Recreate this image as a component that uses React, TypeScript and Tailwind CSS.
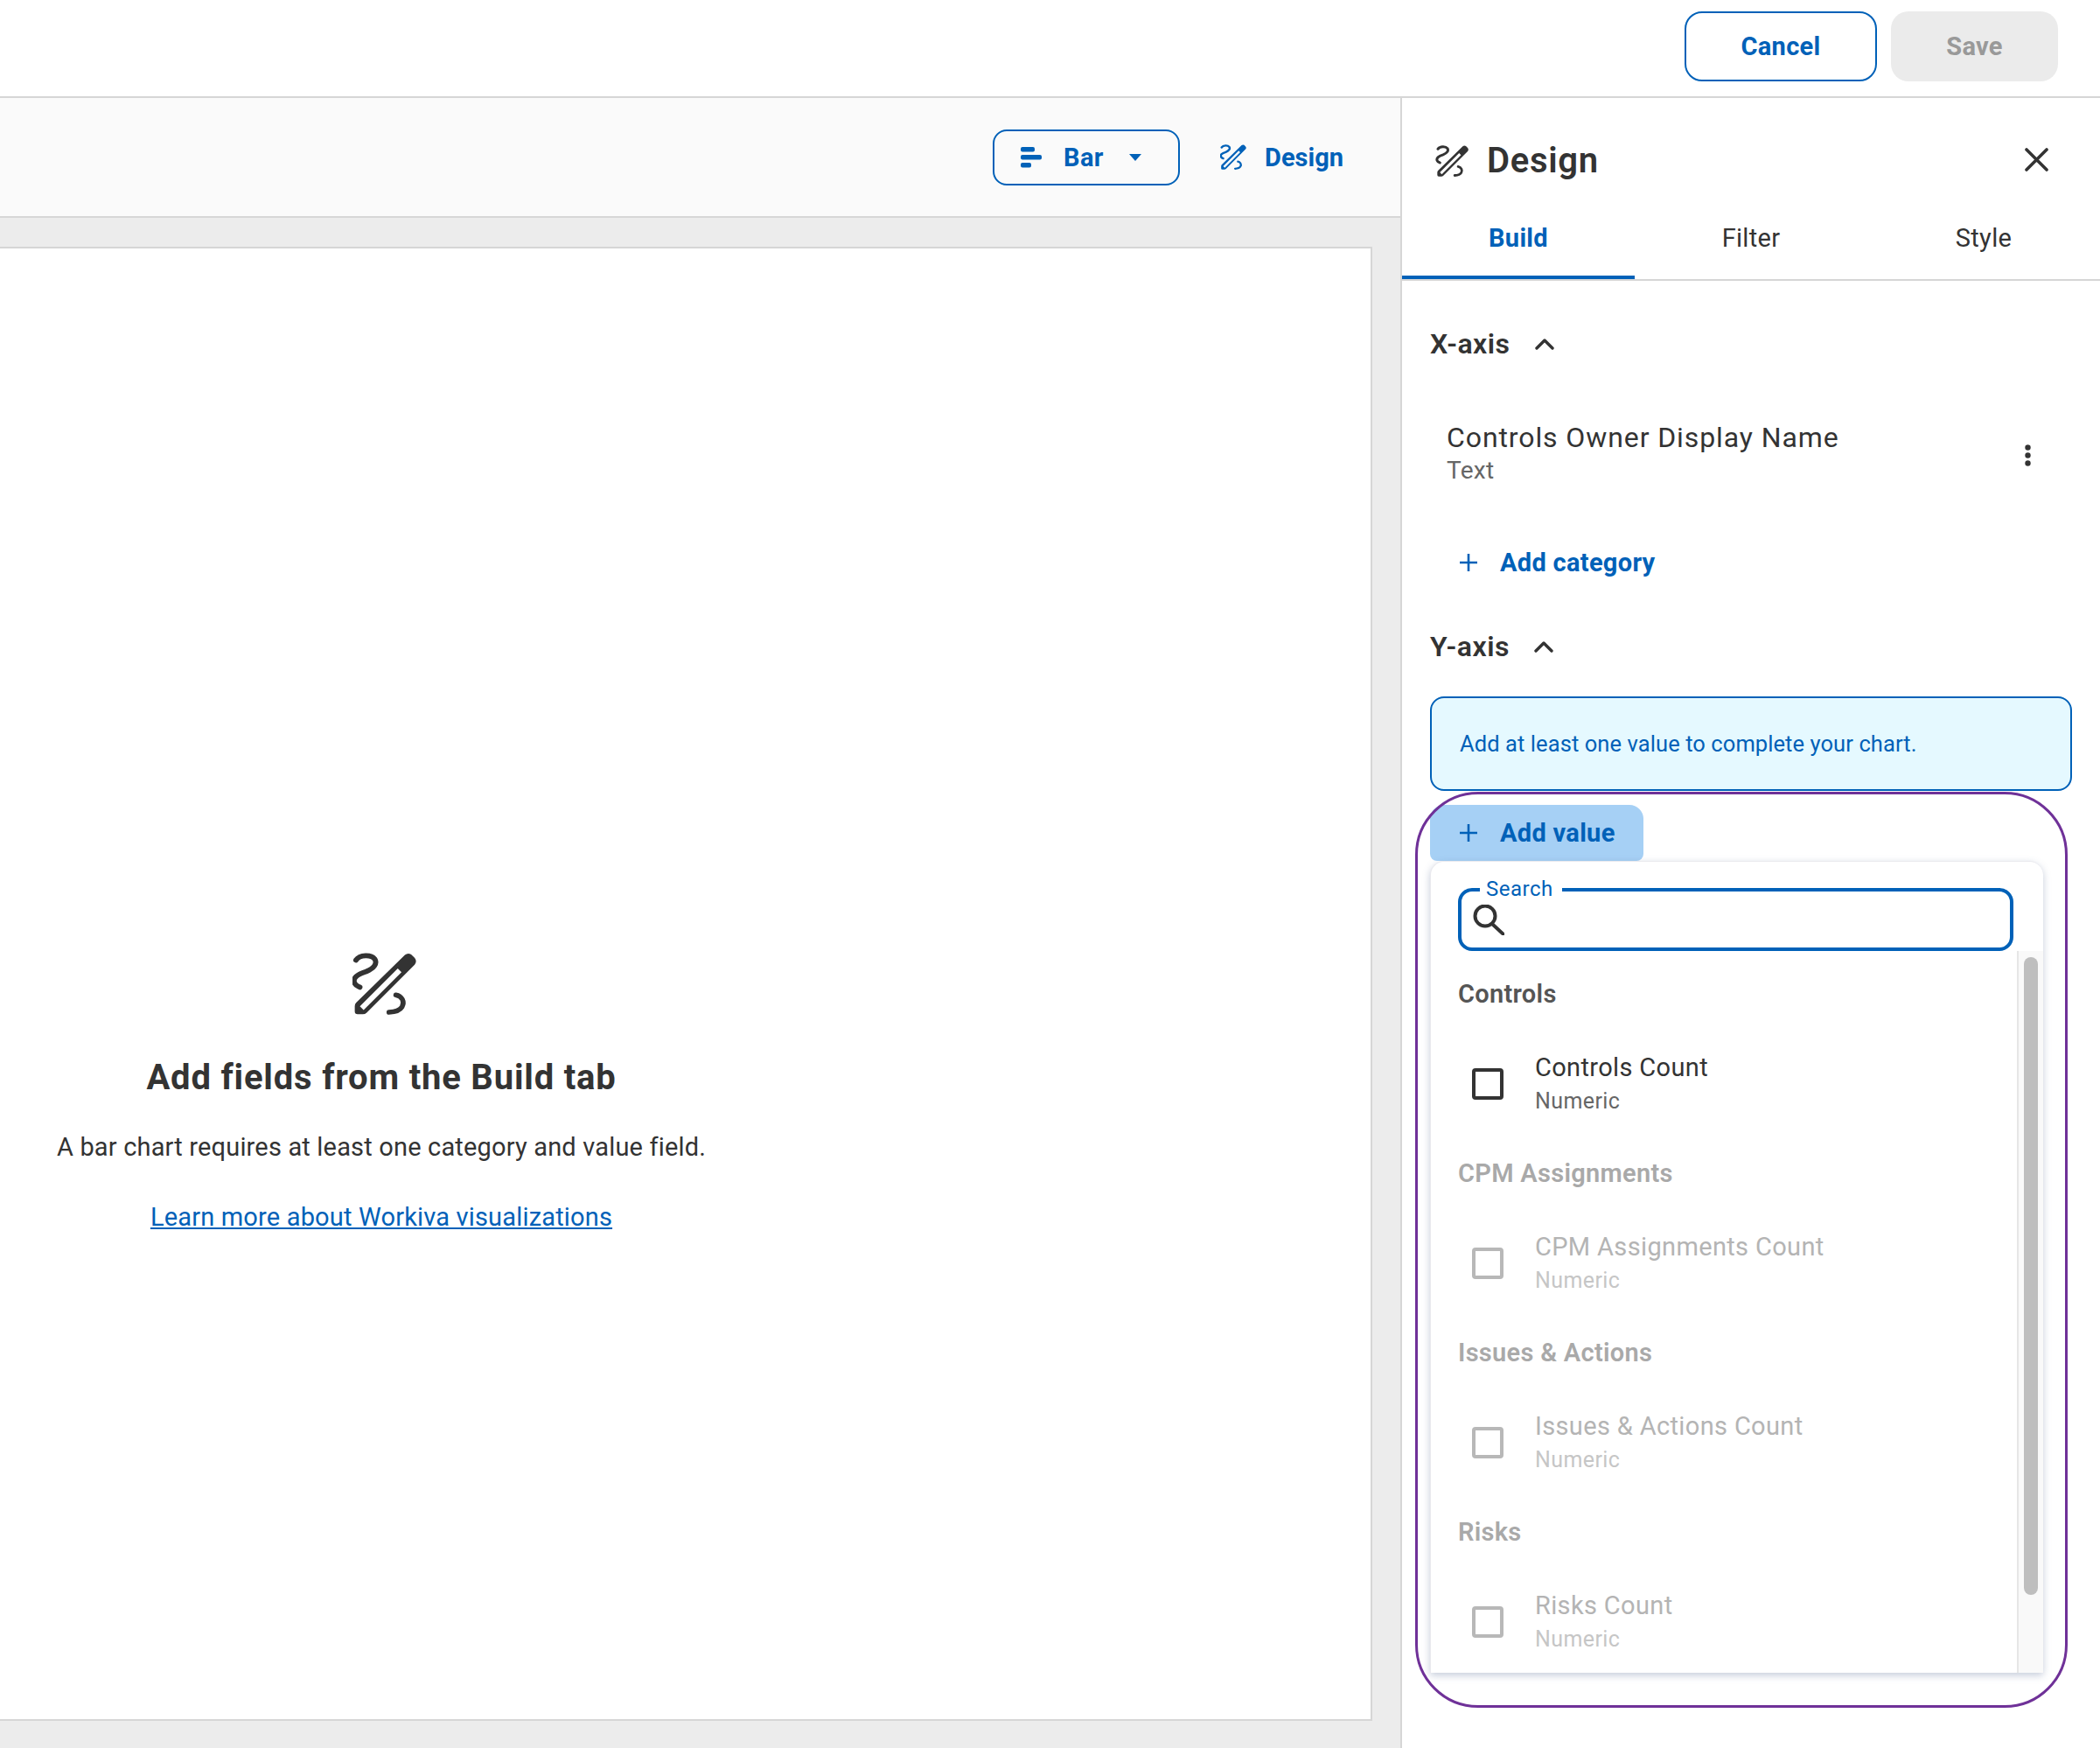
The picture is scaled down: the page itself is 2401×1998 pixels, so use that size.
import React from "react";

function PencilIcon({ className }: { className: string }) {
  return (
    <svg viewBox="124 82 224 218" className={className} fill="none">
      <path
        fill="currentColor"
        fillRule="evenodd"
        d="M308 90Q318 81 330 88L342 100Q352 112 342 124L174 292Q168 298 160 298L142 298Q132 298 132 288L132 270Q132 262 137 257ZM283 137L296 150L163 283L150 270Z"
      />
      <path
        stroke="currentColor"
        strokeWidth="18"
        strokeLinecap="round"
        d="M136 108C150 88 190 88 202 104C212 120 200 136 172 148C140 158 122 172 132 190C136 198 144 200 150 203"
      />
      <path
        stroke="currentColor"
        strokeWidth="17"
        strokeLinecap="round"
        d="M276 230C298 234 308 254 298 272C290 286 270 290 252 291"
      />
    </svg>
  );
}

function BarIcon() {
  return (
    <svg viewBox="0 0 24 24" className="w-6 h-6 text-[#0061b8]" fill="currentColor">
      <rect x="0" y="0" width="16" height="5.4" rx="2" />
      <rect x="0" y="9" width="24" height="5.4" rx="2" />
      <rect x="0" y="18" width="12" height="5.4" rx="2" />
    </svg>
  );
}

function PlusIcon() {
  return (
    <svg viewBox="0 0 20 20" className="w-5 h-5 shrink-0" stroke="currentColor" strokeWidth="2.6" fill="none">
      <path d="M10 0V20M0 10H20" />
    </svg>
  );
}

function Chevron() {
  return (
    <svg viewBox="0 0 22 13" className="w-[22px] h-[13px] text-[#333333]" fill="none" stroke="currentColor" strokeWidth="3.4" strokeLinecap="round" strokeLinejoin="round">
      <path d="M2 11L11 2L20 11" />
    </svg>
  );
}

function AddButton({ label }: { label: string }) {
  return (
    <div className="flex items-center gap-[26px] text-[#0061b8] text-[29px] font-bold tracking-[0.3px] leading-none">
      <PlusIcon />
      <span>{label}</span>
    </div>
  );
}

function Group({ title, item, disabled }: { title: string; item: string; disabled?: boolean }) {
  return (
    <div className="h-[205px] flex flex-col">
      <div className={`h-[34px] mt-[32px] -ml-[1px] flex items-center text-[29px] font-semibold leading-none tracking-[0.3px] ${disabled ? "text-[#a9a9a9]" : "text-[#555555]"}`}>
        {title}
      </div>
      <div className="flex items-center mt-[49px] pl-[15px]">
        <div className={`w-9 h-9 rounded-[4px] border-[4px] ${disabled ? "border-[#b8b8b8]" : "border-[#333333]"}`} />
        <div className="ml-9 flex flex-col">
          <div className={`text-[29px] leading-[36px] tracking-[0.35px] ${disabled ? "text-[#b4b4b4]" : "text-[#333333]"}`}>{item}</div>
          <div className={`text-[25px] leading-[32px] mt-[5px] tracking-[0.4px] ${disabled ? "text-[#c6c6c6]" : "text-[#666666]"}`}>Numeric</div>
        </div>
      </div>
    </div>
  );
}

export default function App() {
  return (
    <div className="w-[2401px] h-[1998px] overflow-hidden bg-white flex flex-col font-[Roboto,sans-serif] text-[#333333]">
      <header className="h-[112px] shrink-0 border-b-2 border-[#d6d6d6] flex items-center justify-end gap-4 pr-[48px] pb-[5px]">
        <button className="w-[220px] h-[80px] pt-[2px] rounded-[20px] border-2 border-[#0061b8] text-[#0061b8] text-[29px] font-bold tracking-[0.3px]">Cancel</button>
        <button className="w-[191px] h-[80px] pt-[2px] rounded-[20px] bg-[#ebebeb] text-[#999999] text-[29px] font-bold tracking-[0.3px]">Save</button>
      </header>

      <div className="flex-1 flex min-h-0">
        <main className="w-[1601px] shrink-0 flex flex-col bg-[#ececec]">
          <div className="h-[137px] shrink-0 bg-[#fafafa] border-b-2 border-[#d6d6d6] flex items-center justify-end pr-[65px]">
            <button className="w-[214px] h-[64px] rounded-[16px] border-2 border-[#0061b8] flex items-center pl-[30px] text-[#0061b8]">
              <BarIcon />
              <span className="ml-[25px] pt-[2px] text-[29px] font-bold tracking-[0.3px]">Bar</span>
              <svg viewBox="0 0 14 8" className="w-[14px] h-2 ml-[29px]" fill="currentColor">
                <path d="M0 0H14L7 8Z" />
              </svg>
            </button>
            <div className="ml-[46px] flex items-center text-[#0061b8]">
              <PencilIcon className="w-[30px] h-[29px]" />
              <span className="ml-[21px] pt-[2px] text-[29px] font-bold">Design</span>
            </div>
          </div>
          <div className="flex-1 pt-[33px] pr-[32px]">
            <div className="h-[1685px] bg-white border-r-2 border-t-2 border-b-2 border-[#d6d6d6] pt-[805px]">
              <div className="w-[872px] flex flex-col items-center">
                <PencilIcon className="w-[73px] h-[71px] ml-[6px] text-[#333333]" />
                <h2 className="mt-[47px] text-[40px] leading-[50px] font-bold tracking-[0.8px]">Add fields from the Build tab</h2>
                <p className="mt-[34px] text-[29px] leading-[40px] tracking-[0.17px]">A bar chart requires at least one category and value field.</p>
                <a className="mt-[40px] text-[29px] leading-[40px] tracking-[0.17px] text-[#0061b8] underline">Learn more about Workiva visualizations</a>
              </div>
            </div>
          </div>
        </main>

        <aside className="relative flex-1 border-l-2 border-[#d6d6d6] bg-white flex flex-col">
          <div className="h-[128px] shrink-0 flex justify-between pl-[38px] pr-[59px] pt-[48px]">
            <div className="flex items-center h-12">
              <PencilIcon className="w-[39px] h-[36px] text-[#333333]" />
              <span className="ml-[20px] text-[40px] font-semibold leading-none tracking-[0.7px]">Design</span>
            </div>
            <svg viewBox="0 0 27 27" className="w-[27px] h-[27px] mt-[9px]" fill="none" stroke="#333333" strokeWidth="3.6" strokeLinecap="round">
              <path d="M2 2L25 25M25 2L2 25" />
            </svg>
          </div>

          <div className="h-[81px] shrink-0 grid grid-cols-3 border-b-2 border-[#d6d6d6] text-[29px] tracking-[0.3px]">
            <div className="h-[79px] border-b-4 border-[#0061b8] flex items-center justify-center pb-[10px] text-[#0061b8] font-bold">Build</div>
            <div className="h-[79px] border-b-4 border-transparent flex items-center justify-center pb-[10px]">Filter</div>
            <div className="h-[79px] border-b-4 border-transparent flex items-center justify-center pb-[10px]">Style</div>
          </div>

          <div className="pl-[32px] pr-[31px]">
            <div className="mt-[56px] h-[32px] flex items-center gap-[28px] text-[32px] font-semibold leading-none tracking-[0.5px]">
              <span>X-axis</span>
              <Chevron />
            </div>
            <div className="mt-[71px] flex items-center justify-between pl-[19px] pr-[48px]">
              <div className="flex flex-col">
                <div className="text-[32px] leading-[40px] tracking-[0.9px]">Controls Owner Display Name</div>
                <div className="text-[28px] leading-[36px] text-[#666666] tracking-[0.3px]">Text</div>
              </div>
              <svg viewBox="0 0 7 25" className="w-[7px] h-[25px] mt-[4px]" fill="#333333">
                <circle cx="3.5" cy="3.5" r="3.2" />
                <circle cx="3.5" cy="12.5" r="3.2" />
                <circle cx="3.5" cy="21.5" r="3.2" />
              </svg>
            </div>
            <div className="mt-[71px] h-[32px] pl-[34px] flex items-center">
              <AddButton label="Add category" />
            </div>
            <div className="mt-[64px] h-[32px] flex items-center gap-[28px] text-[32px] font-semibold leading-none tracking-[0.5px]">
              <span>Y-axis</span>
              <Chevron />
            </div>
            <div className="mt-[41px] w-[734px] h-[108px] rounded-[16px] border-2 border-[#0061b8] bg-[#e5f9ff] flex items-center pl-[32px] text-[25.5px] tracking-[0.08px] text-[#0061b8]">
              Add at least one value to complete your chart.
            </div>

            <div className="mt-[16px] w-[244px] h-[64px] rounded-t-[16px] rounded-b-[8px] bg-[#a6d0f5] flex items-center pl-[34px]">
              <AddButton label="Add value" />
            </div>

            <div className="w-[701px] h-[928px] rounded-t-[16px] bg-white border-t border-l border-[#e9e9ee] shadow-[0_3px_8px_rgba(90,110,150,0.35)] flex flex-col overflow-hidden">
              <div className="relative mx-[31px] mt-[30px] h-[72px] shrink-0 w-[635px] rounded-[16px] border-[4px] border-[#0061b8]">
                <div className="absolute left-[21px] -top-[13px] h-[20px] px-[7px] w-[94px] bg-white flex items-center text-[24px] leading-none tracking-[0.5px] text-[#0061b8]">Search</div>
                <svg viewBox="0 0 36 35" className="absolute left-[13px] top-[15px] w-9 h-[35px]" fill="none" stroke="#333333" strokeWidth="4">
                  <circle cx="14" cy="13" r="11.5" />
                  <path d="M22 22L35 34" strokeLinecap="round" />
                </svg>
              </div>
              <div className="flex-1 min-h-0 flex">
                <div className="flex-1 pl-[32px]">
                  <Group title="Controls" item="Controls Count" />
                  <Group title="CPM Assignments" item="CPM Assignments Count" disabled />
                  <Group title="Issues & Actions" item="Issues & Actions Count" disabled />
                  <Group title="Risks" item="Risks Count" disabled />
                </div>
                <div className="w-[30px] shrink-0 bg-[#f9f9f9] border-l-2 border-[#e6e6e6] pt-[7px] pl-[6px]">
                  <div className="w-4 h-[729px] rounded-full bg-[#bebebe]" />
                </div>
              </div>
            </div>
          </div>

          <div className="absolute left-[15px] top-[793px] w-[746px] h-[1047px] rounded-[72px] border-[3px] border-[#6f3198] pointer-events-none" />
        </aside>
      </div>
    </div>
  );
}
